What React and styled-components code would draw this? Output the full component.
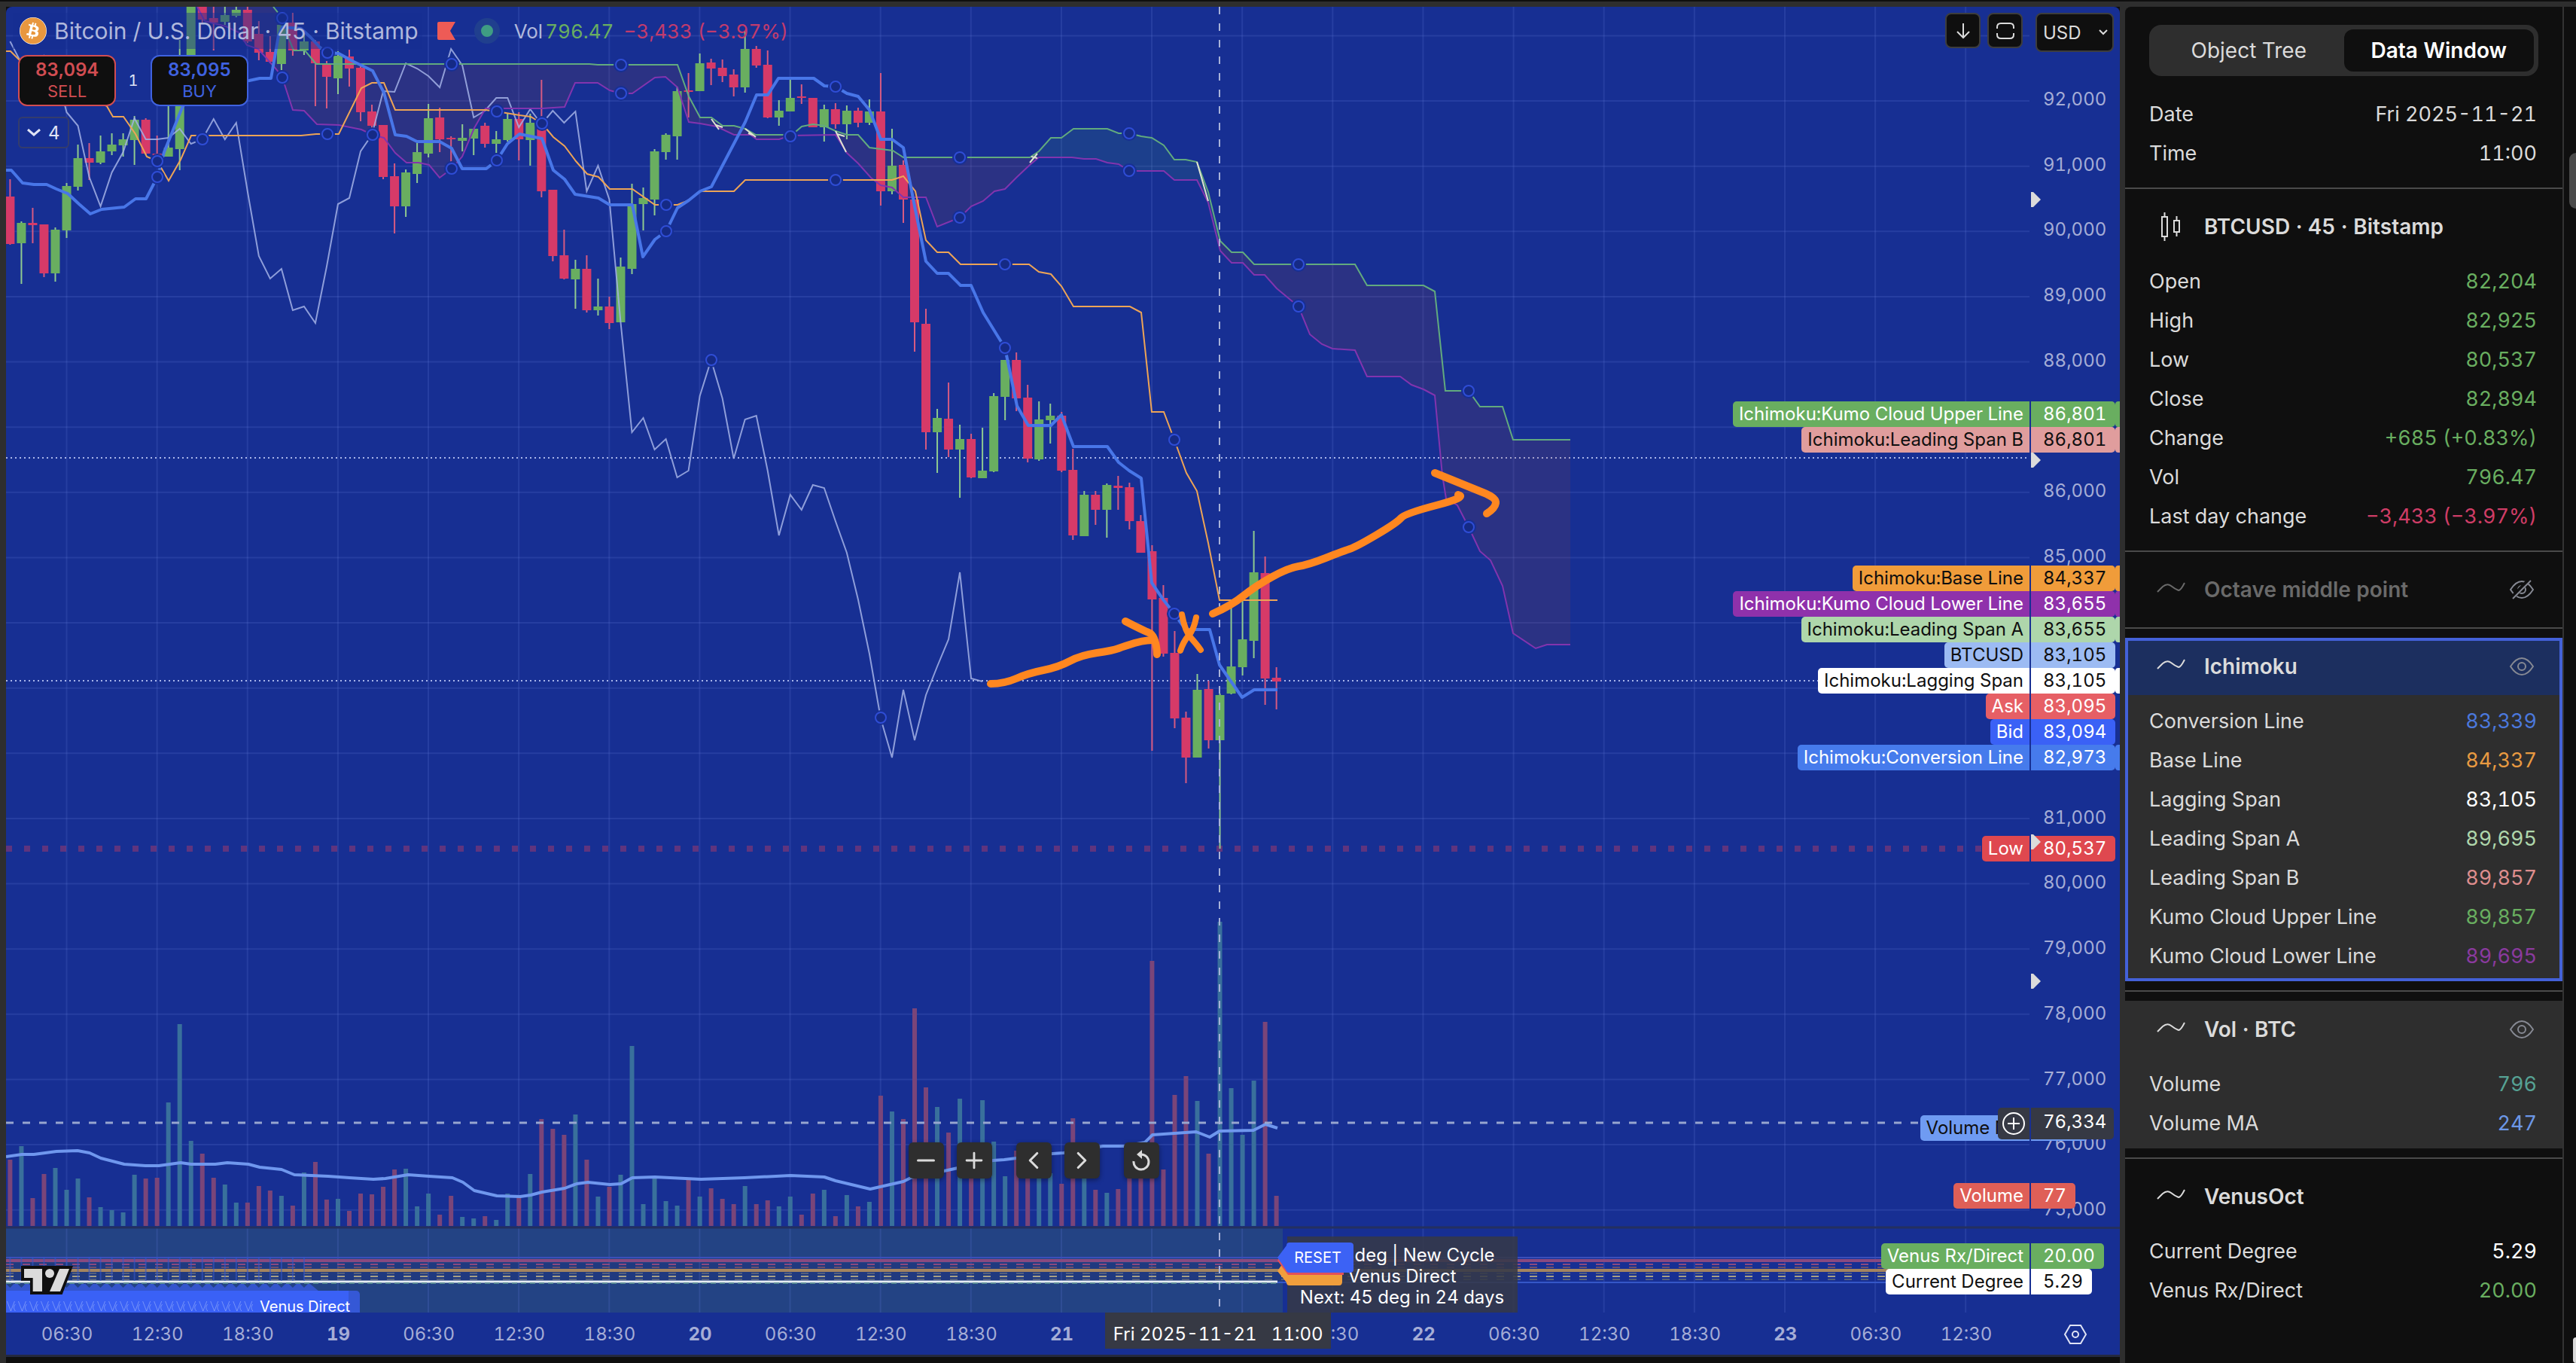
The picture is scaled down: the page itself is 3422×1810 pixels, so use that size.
import React, { useState } from 'react'
import styled, { createGlobalStyle } from 'styled-components';
import { FaBitcoin } from 'react-icons/fa';
import { Minus, Plus, ChevronLeft, ChevronRight } from 'lucide-react';

const CHART_BG = '#172f93';
const UP = '#69ae60';
const DOWN = '#d63a68';

const GlobalStyle = createGlobalStyle`
  * {
    box-sizing: border-box;
  }

  body {
    margin: 0;
    background: #0f0f0f;
    color: #dbdbdb;
    font-family: Inter, Roboto, sans-serif;
    font-size: 24px;
    font-variant-numeric: tabular-nums;
  }

  button, select {
    font-family: inherit;
    font-variant-numeric: inherit;
    margin: 0;
    cursor: pointer;
  }
`

const Page = styled.div`
  display: flex;
  flex-direction: column;
  min-height: 100vh;
  background: #2e2e2e;
  border-top: 2px solid #0f0f0f;
`

const Workspace = styled.div`
  flex: 1;
  display: flex;
  padding: 7px 0 0 8px;
`

const ChartColumn = styled.main`
  flex: 1;
  display: flex;
  flex-direction: column;
  background: #0f0f0f;
`

const ChartCard = styled.section`
  flex: 1;
  display: flex;
  flex-direction: column;
  background: ${CHART_BG};
  border-bottom: 3px solid #24293f;
  border-radius: 8px 8px 0 0;
  overflow: hidden;
`

const Footer = styled.div`
  height: 8px;
`

const ChartBody = styled.div`
  position: relative;
  flex: 1;
  display: flex;
`

const Plot = styled.div`
  position: relative;
  flex: 1;
`

const PlotSvg = styled.svg`
  position: absolute;
  inset: 0;
  width: 100%;
  height: 100%;
`

const PriceAxis = styled.div`
  width: 120px;
  display: flex;
  flex-direction: column;
`

const PriceScale = styled.div`
  flex: 1;
  display: flex;
  flex-direction: column;
  justify-content: space-between;
  padding: 108px 0 8px 18px;
  border-bottom: 3px solid #24305f;
  color: #a5add6;
`

const PriceLabel = styled.span`
  height: 30px;
  line-height: 30px;
`

const LowerScale = styled.div`
  height: 111px;
`

const TimeAxis = styled.div`
  position: relative;
  display: flex;
  height: 56px;
  padding: 0 144px 0 21px;
`

const TimeLabel = styled.span`
  flex: 1 1 0;
  text-align: center;
  line-height: 58px;
  color: #a5add6;
  font-weight: ${props => props.$day ? 700 : 400};
`

const CrosshairTime = styled.span`
  position: absolute;
  left: 52%;
  top: 0;
  width: 300px;
  height: 48px;
  line-height: 58px;
  text-align: center;
  white-space: pre;
  background: #363944;
  color: #fff;
`

const AxisSettings = styled.button`
  position: absolute;
  right: 43px;
  top: 14px;
  width: 32px;
  height: 30px;
  padding: 0;
  border: 0;
  background: none;
  color: #dfe3f5;
`

const Legend = styled.div`
  position: absolute;
  left: 9px;
  top: 8px;
`

const LegendRow = styled.div`
  display: flex;
  align-items: center;
  height: 48px;
`

const LegendTitle = styled.div`
  display: flex;
  align-items: center;
  gap: 10px;
  height: 48px;
  padding: 0 5px 0 9px;
  background: rgba(23, 47, 147, 0.45);
  color: #b0b8dc;
  font-size: 30px;
`

const CoinIcon = styled.span`
  display: flex;
  border-radius: 50%;
  background: #fff;
  color: #e8973f;
  font-size: 36px;
`

const Flag = styled.svg`
  margin-left: 20px;
`

const StatusDot = styled.span`
  width: 34px;
  height: 34px;
  margin: 0 19px 0 25px;
  border: 9px solid #203f8e;
  border-radius: 50%;
  background: #3f9d83;
`

const LegendText = styled.span`
  margin-right: ${props => props.$gap || 0}px;
  color: ${props => props.$color || '#b0b8dc'};
  font-size: 26px;
`

const TradeRow = styled.div`
  display: flex;
  align-items: center;
  margin: 8px 0 14px 7px;
`

const TradeButton = styled.button`
  display: flex;
  flex-direction: column;
  align-items: center;
  justify-content: center;
  width: 130px;
  height: 68px;
  padding: 0;
  border: 2px solid currentColor;
  border-radius: 12px;
  background: #0f0f0f;
  color: ${props => props.$color};
  font-size: 22px;
  line-height: 28px;
`

const TradePrice = styled.strong`
  font-size: 24px;
  font-weight: 600;
`

const Spread = styled.span`
  width: 46px;
  text-align: center;
  font-size: 20px;
  color: #dfe3f5;
`

const CollapseButton = styled.button`
  display: flex;
  align-items: center;
  gap: 10px;
  height: 42px;
  margin-left: 7px;
  padding: 0 10px;
  border: 2px solid #343c6c;
  border-radius: 6px;
  background: ${CHART_BG};
  color: #dfe3f5;
  font-size: 24px;
`

const TopControls = styled.div`
  position: absolute;
  top: 8px;
  right: 8px;
  display: flex;
  gap: 9px;
`

const SquareButton = styled.button`
  display: flex;
  align-items: center;
  justify-content: center;
  width: 47px;
  height: 47px;
  padding: 0;
  border: 2px solid #3d3d3d;
  border-radius: 8px;
  background: #0f0f0f;
  color: #dbdbdb;
`

const CurrencyBox = styled.label`
  position: relative;
  width: 104px;
  height: 52px;
  margin-left: 8px;
`

const CurrencySelect = styled.select`
  appearance: none;
  width: 100%;
  height: 100%;
  padding: 0 8px;
  border: 2px solid #3d3d3d;
  border-radius: 8px;
  background: #0f0f0f;
  color: #dbdbdb;
  font-size: 24px;
`

const SelectArrow = styled.svg`
  position: absolute;
  right: 8px;
  top: 22px;
  pointer-events: none;
`

const NavControls = styled.div`
  position: absolute;
  left: 44.6%;
  bottom: 178px;
  display: flex;
  gap: 17px;
`

const NavButton = styled.button`
  display: flex;
  align-items: center;
  justify-content: center;
  width: 47px;
  height: 48px;
  margin-right: ${props => props.$last ? 15 : 0}px;
  padding: 0;
  border: 0;
  border-radius: 6px;
  background: #2e2e2e;
  color: #dbdbdb;
  box-shadow: 0 2px 6px rgba(0, 0, 0, 0.4);
`

const Callout = styled.div`
  position: absolute;
  left: 63.3%;
  bottom: 0;
  width: 306px;
  height: 101px;
  padding: 11px 0;
  background: rgba(54, 57, 72, 0.88);
  color: #fff;
  line-height: 28px;
  text-align: center;
`

const CalloutLine = styled.div`
  padding-left: ${props => props.$indent || 0}px;
`

const ResetTag = styled.div`
  position: absolute;
  left: -13px;
  top: 8px;
  width: 100px;
  height: 56px;
  color: #fff;
`

const ResetShape = styled.svg`
  position: absolute;
  left: 0;
  top: 0;
`

const ResetText = styled.span`
  position: relative;
  display: block;
  padding-left: 8px;
  line-height: 40px;
  font-size: 20px;
`

const CycleTag = styled.span`
  position: absolute;
  left: 337px;
  bottom: -4px;
  line-height: 24px;
  font-size: 20px;
  color: #fff;
`

const Logo = styled.svg`
  position: absolute;
  left: 20px;
  bottom: 24px;
`

const TagStack = styled.div`
  position: absolute;
  top: ${props => props.$top}px;
  right: 0;
  display: flex;
  flex-direction: column;
  align-items: flex-end;
`

const TagRow = styled.div`
  display: flex;
  height: 34px;
  line-height: 34px;
`

const TagName = styled.span`
  margin-right: 2px;
  padding: 0 8px;
  border-radius: 5px 0 0 5px;
  background: ${props => props.$bg};
  color: ${props => props.$color};
`

const TagCell = styled.span`
  display: flex;
  justify-content: space-between;
  width: 118px;
`

const TagValue = styled.span`
  min-width: ${props => props.$wide ? 110 : 0}px;
  padding: 0 12px 0 16px;
  border-radius: 0 5px 5px 0;
  background: ${props => props.$bg};
  color: ${props => props.$color};
`

const TagStrip = styled.span`
  width: 6px;
  border-radius: 4px 0 0 4px;
  background: ${props => props.$bg};
`

const CrosshairPrice = styled.div`
  position: absolute;
  top: 1462px;
  right: 8px;
  display: flex;
  gap: 2px;
  height: 42px;
  line-height: 38px;
  color: #fff;
`

const CrosshairAdd = styled.button`
  display: flex;
  align-items: center;
  justify-content: center;
  width: 42px;
  padding: 0;
  border: 0;
  border-radius: 5px 0 0 5px;
  background: #363944;
  color: #fff;
`

const CrosshairValue = styled.span`
  width: 110px;
  padding-left: 16px;
  border-radius: 0 5px 5px 0;
  background: #363944;
`

const AxisMarker = styled.svg`
  position: absolute;
  right: 105px;
  top: ${props => props.$top}px;
`

const SidePanel = styled.aside`
  width: 583px;
  margin-left: 7px;
  padding-top: 24px;
  border-right: 2px solid #333;
  border-radius: 8px 0 0 0;
  background: #0f0f0f;
  font-size: 27px;
`

const Tabs = styled.div`
  display: flex;
  height: 68px;
  margin: 0 32px 24px;
  padding: 6px;
  border-radius: 16px;
  background: #2e2e2e;
`

const Tab = styled.button`
  flex: 1;
  border: 0;
  border-radius: 12px;
  background: ${props => props.$active ? '#0f0f0f' : 'transparent'};
  color: ${props => props.$active ? '#fff' : '#dbdbdb'};
  font-size: 28px;
  font-weight: ${props => props.$active ? 600 : 400};
`

const Section = styled.section`
  padding-bottom: ${props => props.$empty ? 0 : 8}px;
  background: ${props => props.$shaded ? '#2e2e2e' : 'transparent'};
  box-shadow: ${props => props.$selected ? 'inset 0 0 0 4px #4361d8' : 'none'};
`

const Divider = styled.hr`
  height: 2px;
  margin: 12px 0;
  border: 0;
  background: #4a4a4a;
`

const SectionHeader = styled.div`
  display: flex;
  align-items: center;
  height: 76px;
  margin-bottom: ${props => props.$empty ? 0 : 8}px;
  padding: 0 32px;
  background: ${props => props.$selected ? '#1c2f5f' : 'transparent'};
  box-shadow: ${props => props.$selected ? 'inset 0 4px #4361d8, inset 4px 0 #4361d8, inset -4px 0 #4361d8' : 'none'};
`

const SectionTitle = styled.h2`
  flex: 1;
  margin: 0 0 0 15px;
  font-size: 28px;
  font-weight: 600;
  color: ${props => props.$muted ? '#6a6a6a' : '#dbdbdb'};
`

const EyeButton = styled.button`
  width: 44px;
  height: 44px;
  padding: 0;
  border: 0;
  background: none;
  color: #868993;
`

const DataTable = styled.table`
  width: 100%;
  border-spacing: 0;

  th, td {
    height: 52px;
    padding: 0 32px;
    font-weight: 400;
    text-align: left;
  }

  td {
    text-align: right;
    padding-right: 34px;
  }
`

const DataValue = styled.td`
  color: ${props => props.$color || '#dbdbdb'};
`

const Edge = styled.div`
  display: flex;
  flex-direction: column;
  justify-content: space-between;
  align-items: flex-end;
  width: 16px;
  padding-top: 194px;
  background: #0f0f0f;
  overflow: hidden;
`

const EdgeHandle = styled.span`
  width: 9px;
  height: 74px;
  border-radius: 9px 0 0 9px;
  background: #4a4a4a;
`

const EdgeCorner = styled.span`
  width: 4px;
  height: 34px;
  border-radius: 4px 0 0 4px;
  background: #dbdbdb;
`

// [high, body top, body bottom, low, direction, volume bar height]
const candles = [
  [238, 261, 324, 325, 0, 88], [294, 296, 323, 377, 1, 106], [276, 296, 299, 323, 0, 37], [298, 298, 363, 368, 0, 69],
  [302, 305, 363, 374, 1, 77], [243, 247, 306, 316, 1, 48], [192, 210, 248, 253, 1, 63], [190, 210, 216, 239, 0, 38],
  [180, 201, 216, 218, 1, 25], [177, 192, 201, 206, 1, 21], [177, 185, 193, 208, 1, 18], [154, 159, 186, 219, 1, 68],
  [157, 159, 204, 205, 0, 63], [180, 204, 206, 213, 0, 64], [105, 196, 208, 208, 1, 164], [53, 75, 198, 226, 1, 268],
  [9, 9, 76, 100, 1, 113], [9, 9, 26, 30, 0, 96], [9, 24, 30, 67, 0, 64], [9, 20, 29, 33, 1, 55],
  [9, 13, 21, 23, 1, 31], [9, 13, 55, 57, 0, 31], [28, 45, 70, 80, 0, 53], [48, 69, 82, 84, 0, 47],
  [30, 33, 85, 93, 1, 40], [17, 30, 67, 74, 0, 27], [43, 55, 67, 73, 1, 71], [53, 55, 84, 141, 0, 85],
  [81, 84, 102, 144, 0, 35], [68, 74, 104, 125, 1, 36], [66, 75, 91, 115, 0, 20], [88, 90, 149, 161, 0, 43],
  [139, 148, 167, 171, 0, 42], [166, 166, 235, 238, 0, 52], [217, 234, 274, 310, 0, 75], [225, 229, 274, 288, 1, 76],
  [190, 202, 231, 243, 1, 26], [138, 157, 204, 209, 1, 43], [143, 156, 185, 202, 0, 15], [181, 183, 185, 215, 0, 40],
  [165, 183, 187, 201, 1, 12], [171, 171, 184, 206, 1, 10], [163, 167, 191, 196, 0, 13], [174, 185, 191, 203, 1, 8],
  [151, 158, 186, 188, 1, 43], [149, 158, 185, 213, 0, 40], [151, 163, 186, 220, 1, 69], [106, 165, 254, 262, 0, 142],
  [252, 252, 340, 347, 0, 129], [305, 339, 370, 371, 0, 121], [345, 357, 371, 410, 1, 148], [339, 357, 412, 415, 0, 88],
  [370, 407, 412, 419, 1, 39], [394, 407, 429, 437, 0, 52], [342, 354, 428, 428, 1, 68], [244, 271, 357, 364, 1, 239],
  [249, 263, 271, 306, 1, 29], [198, 201, 265, 286, 1, 64], [177, 179, 202, 212, 1, 33], [115, 121, 181, 212, 1, 27],
  [97, 120, 122, 156, 0, 62], [71, 84, 121, 121, 1, 39], [78, 83, 91, 113, 0, 50], [79, 90, 101, 109, 0, 36],
  [92, 99, 116, 128, 0, 29], [41, 65, 116, 123, 1, 53], [61, 65, 87, 90, 0, 29], [67, 86, 156, 157, 0, 34],
  [133, 147, 156, 167, 1, 26], [106, 130, 148, 148, 1, 39], [112, 128, 130, 138, 0, 15], [130, 130, 169, 169, 0, 43],
  [139, 145, 169, 188, 1, 48], [137, 145, 165, 171, 0, 13], [140, 147, 165, 185, 1, 41], [143, 147, 163, 169, 0, 26],
  [132, 148, 163, 166, 1, 32], [97, 148, 254, 273, 0, 173], [171, 220, 254, 258, 1, 152], [213, 219, 265, 296, 0, 142],
  [265, 265, 428, 467, 0, 289], [410, 430, 574, 597, 0, 184], [543, 555, 574, 628, 1, 158], [508, 556, 597, 607, 0, 124],
  [564, 583, 597, 661, 1, 169], [576, 583, 634, 635, 0, 75], [568, 625, 635, 635, 1, 167], [522, 526, 626, 627, 1, 112],
  [478, 478, 527, 558, 1, 66], [468, 478, 529, 546, 0, 100], [511, 528, 609, 614, 0, 78], [533, 557, 610, 612, 1, 70],
  [536, 552, 558, 589, 1, 70], [547, 552, 625, 627, 0, 56], [596, 624, 711, 717, 0, 143], [652, 657, 712, 712, 1, 70],
  [652, 657, 677, 697, 0, 48], [642, 644, 677, 714, 1, 44], [632, 645, 648, 677, 0, 49], [641, 647, 692, 703, 0, 70],
  [684, 692, 734, 734, 0, 70], [724, 732, 796, 997, 0, 352], [777, 794, 868, 872, 0, 75], [838, 867, 954, 967, 0, 174],
  [945, 953, 1006, 1040, 0, 199], [895, 916, 1006, 1006, 1, 166], [904, 915, 983, 994, 0, 96], [921, 923, 983, 1127, 1, 404],
  [803, 885, 921, 922, 1, 183], [796, 849, 886, 897, 1, 121], [705, 760, 851, 874, 1, 193], [739, 761, 901, 936, 0, 271],
  [886, 900, 905, 942, 0, 40],
];

const candleX = i => 13.4 + i * 15.02;

const conversionLine = '8,226 15,226 30,243 45,245 62,245 75,251 90,257 105,271 120,284 135,278 165,275 180,264 194,264 209,235 218,202 242,143 260,113 331,107 345,104 360,104 370,47 375,36 400,38 413,50 425,63 435,70 450,71 470,82 495,94 510,123 525,179 540,181 554,188 584,188 600,197 614,224 646,224 660,213 674,191 690,178 720,184 735,226 750,238 764,258 795,263 810,272 840,272 854,341 870,318 885,307 900,276 915,266 930,254 945,248 990,162 1005,126 1020,126 1034,104 1081,104 1095,114 1110,115 1125,124 1140,128 1155,146 1170,185 1185,185 1200,196 1215,274 1230,347 1245,363 1260,363 1276,379 1290,379 1306,415 1335,462 1351,539 1366,565 1396,565 1410,551 1426,593 1471,593 1486,614 1500,625 1516,635 1530,774 1545,796 1560,815 1575,836 1607,836 1620,883 1650,926 1666,916 1697,916';
const baseLine = '8,68 14,68 30,84 142,141 150,155 164,155 180,178 195,208 209,214 224,240 240,212 254,180 400,180 420,178 450,178 480,117 494,110 510,110 525,146 645,146 660,148 690,153 705,155 720,164 735,182 750,194 765,214 780,231 795,235 810,251 840,251 870,272 900,272 915,266 930,254 975,254 990,239 1185,239 1200,234 1216,254 1230,319 1245,335 1260,335 1276,351 1367,351 1380,361 1396,364 1410,380 1426,407 1501,407 1516,415 1530,547 1546,547 1560,584 1576,628 1590,652 1605,721 1620,797 1697,797';
const upperLine = '363,9 375,24 383,50 390,67 405,67 420,85 783,85 794,86 900,86 915,128 930,156 945,156 960,167 975,167 990,171 1004,179 1040,179 1050,181 1065,168 1080,165 1095,167 1110,174 1125,179 1140,179 1155,196 1186,200 1200,209 1368,209 1380,201 1396,183 1410,183 1426,171 1471,171 1486,177 1500,177 1516,181 1530,183 1546,193 1560,212 1575,212 1590,215 1605,255 1621,320 1636,335 1651,335 1666,351 1800,351 1816,379 1891,379 1906,387 1920,519 1951,519 1966,540 1996,540 2010,584 2086,584';
const lowerLine = '262,9 272,28 300,35 317,43 328,60 343,65 367,92 375,103 389,146 404,147 421,165 450,166 480,172 495,179 510,183 525,203 540,216 556,216 570,219 584,236 600,224 614,208 630,170 645,144 720,144 750,142 764,110 794,110 810,120 825,124 840,124 870,103 884,102 900,116 915,162 930,164 952,168 975,179 997,179 1005,185 1035,185 1050,180 1110,179 1125,203 1140,217 1157,236 1170,246 1185,249 1200,262 1230,262 1245,301 1275,289 1290,274 1306,267 1321,254 1335,251 1351,235 1368,219 1380,209 1424,209 1440,211 1456,211 1471,216 1486,218 1500,227 1546,227 1560,239 1590,239 1605,269 1621,333 1636,349 1651,349 1666,365 1680,365 1696,383 1725,407 1740,444 1756,457 1770,463 1800,465 1816,500 1860,500 1875,511 1891,517 1906,525 1916,631 1921,662 1936,671 1951,700 1966,732 1980,744 1996,778 2010,841 2040,861 2055,856 2086,856';
const volumeAverage = '8,1536 29,1533 45,1533 75,1529 103,1528 119,1531 134,1538 165,1546 193,1548 211,1548 240,1544 254,1546 286,1546 302,1544 330,1546 345,1550 374,1553 391,1560 436,1562 464,1564 496,1566 512,1565 542,1560 570,1562 601,1564 615,1570 630,1581 660,1588 691,1589 705,1587 720,1583 750,1578 766,1572 781,1570 810,1573 825,1572 840,1564 870,1563 931,1566 989,1564 1050,1561 1095,1563 1110,1568 1156,1579 1200,1569 1210,1564 1254,1555 1319,1541 1334,1540 1350,1538 1398,1532 1413,1531 1465,1522 1494,1522 1521,1517 1531,1507 1560,1505 1589,1503 1607,1510 1620,1502 1665,1501 1681,1493 1697,1498';

const points = line => line.split(' ').map(p => p.split(',').map(Number));

const cloud = (from, to) => {
  const inside = ([x]) => x >= from && x <= to;
  const top = points(upperLine).filter(inside);
  const bottom = points(lowerLine).filter(inside).reverse();
  return [...top, ...bottom].join(' ');
};

// the lagging span is the close price drawn 26 bars back
const laggingLine = candles
  .slice(26)
  .map((c, i) => `${candleX(i)},${c[4] ? c[1] : c[2]}`)
  .join(' ');

const anchors = [
  [209, 214], [209, 235], [269, 185], [375, 24], [375, 103], [435, 70], [435, 178], [495, 179], [600, 85], [600, 224],
  [660, 148], [660, 213], [720, 164], [825, 86], [825, 124], [885, 272], [885, 307], [945, 478], [1050, 181],
  [1110, 115], [1110, 239], [1170, 953], [1275, 209], [1275, 289], [1335, 351], [1335, 462], [1500, 177],
  [1500, 227], [1560, 584], [1560, 815], [1725, 351], [1725, 407], [1951, 519], [1951, 700],
];

const priceLabels = [
  '92,000', '91,000', '90,000', '89,000', '88,000', '', '86,000', '85,000', '', '', '',
  '81,000', '80,000', '79,000', '78,000', '77,000', '76,000', '75,000',
];

const timeLabels = [
  '06:30', '12:30', '18:30', '19', '06:30', '12:30', '18:30', '20', '06:30', '12:30', '18:30', '21',
  '', '', '18:30', '22', '06:30', '12:30', '18:30', '23', '06:30', '12:30',
];

const tagStacks = [
  {
    top: 524,
    tags: [
      { name: 'Ichimoku:Kumo Cloud Upper Line', value: '86,801', bg: '#69ae60', color: '#fff', strip: true },
      { name: 'Ichimoku:Leading Span B', value: '86,801', bg: '#e09d9d', color: '#0f0f0f', strip: true },
    ],
  },
  {
    top: 742,
    tags: [
      { name: 'Ichimoku:Base Line', value: '84,337', bg: '#f09c3a', color: '#0f0f0f', strip: true },
      { name: 'Ichimoku:Kumo Cloud Lower Line', value: '83,655', bg: '#8f31ab', color: '#fff', strip: true },
      { name: 'Ichimoku:Leading Span A', value: '83,655', bg: '#aed6ab', color: '#0f0f0f', strip: true },
      { name: 'BTCUSD', value: '83,105', bg: '#9cbbf3', color: '#0f0f0f' },
      { name: 'Ichimoku:Lagging Span', value: '83,105', bg: '#fff', color: '#0f0f0f', strip: true },
      { name: 'Ask', value: '83,095', bg: '#e65f65', color: '#fff' },
      { name: 'Bid', value: '83,094', bg: '#3a61f6', color: '#fff' },
      { name: 'Ichimoku:Conversion Line', value: '82,973', bg: '#467bec', color: '#fff', strip: true },
    ],
  },
  { top: 1101, tags: [{ name: 'Low', value: '80,537', bg: '#df484f', color: '#fff' }] },
  { top: 1472, tags: [{ name: 'Volume MA', value: '247', bg: '#6f9bf2', color: '#0f0f0f' }] },
  { top: 1562, tags: [{ name: 'Volume', value: '77', bg: '#df5f57', color: '#fff' }] },
  {
    top: 1642,
    tags: [
      { name: 'Venus Rx/Direct', value: '20.00', bg: '#69ae60', color: '#fff' },
      { name: 'Current Degree', value: '5.29', bg: '#fff', color: '#0f0f0f' },
    ],
  },
];

const sections = [
  {
    title: 'BTCUSD · 45 · Bitstamp',
    icon: 'candles',
    rows: [
      ['Open', '82,204', '#69ae60'],
      ['High', '82,925', '#69ae60'],
      ['Low', '80,537', '#69ae60'],
      ['Close', '82,894', '#69ae60'],
      ['Change', '+685 (+0.83%)', '#69ae60'],
      ['Vol', '796.47', '#69ae60'],
      ['Last day change', '−3,433 (−3.97%)', '#cf3d66'],
    ],
  },
  { title: 'Octave middle point', muted: true, eye: 'off', rows: [] },
  {
    title: 'Ichimoku',
    eye: 'on',
    selected: true,
    shaded: true,
    rows: [
      ['Conversion Line', '83,339', '#4b78dc'],
      ['Base Line', '84,337', '#e89a41'],
      ['Lagging Span', '83,105', '#fff'],
      ['Leading Span A', '89,695', '#aed6ab'],
      ['Leading Span B', '89,857', '#dd8d8d'],
      ['Kumo Cloud Upper Line', '89,857', '#69ae60'],
      ['Kumo Cloud Lower Line', '89,695', '#8a3a9e'],
    ],
  },
  {
    title: 'Vol · BTC',
    eye: 'on',
    shaded: true,
    rows: [
      ['Volume', '796', '#56a294'],
      ['Volume MA', '247', '#6c97e6'],
    ],
  },
  {
    title: 'VenusOct',
    rows: [
      ['Current Degree', '5.29', '#fff'],
      ['Venus Rx/Direct', '20.00', '#69ae60'],
    ],
  },
];

function ChartDrawing() {
  const gridX = Array.from({ length: 22 }, (_, i) => 88.5 + i * 120.13);
  const gridY = Array.from({ length: 19 }, (_, i) => 47.4 + i * 86.63);
  const cycles = Array.from({ length: 27 }, (_, i) => candleX(i));

  return (
    <PlotSvg viewBox="8 9 2688 1734" preserveAspectRatio="none" fill="none" aria-hidden="true">
      <rect x="8" y="1631" width="1696" height="112" fill="#234384" />
      <rect x="8" y="1677" width="1696" height="24" fill="#20397f" />
      <g stroke="#5f78d8" strokeOpacity="0.22" strokeWidth="2">
        {gridX.map(x => <path key={x} d={`M${x} 9V1743`} />)}
        {gridY.map(y => <path key={y} d={`M8 ${y}H2696`} />)}
      </g>

      {candles.map((c, i) => (
        <rect key={i} x={candleX(i) - 3} y={1628 - c[5]} width="6" height={c[5]}
          fill={c[4] ? '#39709c' : '#7a4579'} />
      ))}
      <path d="M8 1630H2696" stroke="#24305f" strokeWidth="3" />
      <polyline points={volumeAverage} stroke="#6f97ee" strokeWidth="4" strokeLinejoin="round" />

      <path d="M8 1127H2696" stroke="#b83c66" strokeOpacity="0.45" strokeWidth="8" strokeDasharray="8 16" />
      <path d="M8 608H2696M8 904H2696" stroke="#a9b6ea" strokeWidth="2" strokeDasharray="2 4" />

      <g fill="#a04030" fillOpacity="0.15">
        <polygon points={cloud(262, 1050)} />
        <polygon points={cloud(1110, 1380)} />
        <polygon points={cloud(1621, 2086)} />
      </g>
      <polygon points={cloud(1380, 1621)} fill="#40a060" fillOpacity="0.14" />

      {candles.map((c, i) => (
        <g key={i}>
          <path d={`M${candleX(i)} ${c[0]}V${c[3]}`} stroke={c[4] ? '#8fca90' : '#d65a82'} strokeWidth="2" />
          <rect x={candleX(i) - 6} y={c[1]} width="12" height={c[2] - c[1]} fill={c[4] ? UP : DOWN} />
        </g>
      ))}

      <polyline points={laggingLine} stroke="#a3b1e6" strokeOpacity="0.85" strokeWidth="2" />
      <polyline points={lowerLine} stroke="#8234ae" strokeWidth="2" />
      <polyline points={upperLine} stroke="#62aa7e" strokeWidth="2" />
      <polyline points={baseLine} stroke="#eda456" strokeWidth="2" />
      <polyline points={conversionLine} stroke="#4876e8" strokeWidth="4" strokeLinejoin="round" />
      <path d="M945 158l10 14M951 166l9 3M990 171l14 11M994 177l8 3M1110 174l14 28M1112 178l10 3M1368 216l10 -12M1370 208l8 2M1590 215l15 52" stroke="#dfe3d0" strokeWidth="2" />
      {anchors.map(([x, y]) => (
        <g key={`${x}-${y}`}>
          <circle cx={x} cy={y} r="10" fill={CHART_BG} />
          <circle cx={x} cy={y} r="7" fill="#152a85" stroke="#2f4dd6" strokeWidth="2" />
        </g>
      ))}

      <g strokeWidth="2">
        <path d="M8 1670H2696" stroke="#3a4fba" />
        <path d="M8 1674H2696" stroke="#8a4a80" strokeWidth="4" />
        <path d="M8 1679H2696" stroke="#8a4a80" strokeDasharray="10 12" />
        <path d="M8 1683H2696" stroke="#6a4f6c" strokeDasharray="10 12" />
        <path d="M8 1687H2696" stroke="#a5855f" strokeWidth="4" />
        <path d="M8 1691H2696M8 1699H2696" stroke="#55607c" strokeDasharray="10 12" />
        <path d="M8 1695H2696" stroke="#a79f86" strokeDasharray="10 12" />
        <path d="M1697 1703H2696" stroke="#3557c8" />
        <path d="M8 1702H1697" stroke="#e6edf2" strokeWidth="3" />
        <path d="M8 1704H1697" stroke="#5b8d96" strokeDasharray="7 5" />
      </g>
      <path d="M8 1705H412L424 1715H8Z" fill="#3455cc" />
      <path d="M8 1714H473a5 5 0 0 1 5 5V1743H8Z" fill="#3558d6" />
      <path d="M8 1714H463V1743H8Z" fill="#3a61f6" />
      {cycles.map(x => (
        <g key={x}>
          <path d={`M${x} 1669V1701`} stroke="#3557c8" strokeOpacity="0.6" strokeWidth="2" />
          <path d={`M${x - 5} 1705h10l-5 5z`} fill="#234384" />
        </g>
      ))}
      {cycles.slice(0, 22).map(x => (
        <path key={x} d={`M${x - 4} 1728l5 13 5 -13M${x + 7} 1732q-4 4 0 9`} stroke="#9db4fa" strokeOpacity="0.6" strokeWidth="1" />
      ))}

      <path d="M8 1491H2696" stroke="#98a6cf" strokeWidth="3" strokeDasharray="10 12" />
      <path d="M1620 9V1743" stroke="#a8b2d8" strokeWidth="2" strokeDasharray="10 12" />

      <g stroke="#ff8720" strokeWidth="10" strokeLinecap="round" strokeLinejoin="round">
        <path d="M1316 908Q1334 908 1350 901T1386 890T1421 878T1457 867T1486 861T1507 854T1532 850" />
        <path d="M1495 825Q1514 835 1528 841Q1536 847 1537 869" />
        <path d="M1611 815Q1636 804 1652 791T1690 766T1725 752T1761 741T1793 729T1829 710T1861 688T1908 671T1937 657" />
        <path d="M1906 628L1970 654Q1988 661 1987 668T1975 682" />
        <path d="M1570 816Q1574 838 1582 847T1595 863M1589 820Q1586 836 1579 844T1568 864" strokeWidth="8" />
      </g>
    </PlotSvg>
  )
}

function WaveIcon({ muted }) {
  return (
    <svg width="58" height="36" viewBox="0 0 58 36" fill="none" stroke={muted ? '#6a6a6a' : '#dbdbdb'} strokeWidth="2">
      <path d="M11 21L18 14Q24 9 29 13T39 19Q42 19 47 9" />
    </svg>
  )
}

function CandlesIcon() {
  return (
    <svg width="58" height="44" viewBox="0 0 58 44" fill="none" stroke="#dbdbdb" strokeWidth="2">
      <path d="M17 9h7v26h-7zM20.500 3v6M20.500 35v6M33 14h7v15h-7zM36.500 8v6M36.500 29v6" />
    </svg>
  )
}

function EyeIcon({ off }) {
  return (
    <svg width="44" height="44" viewBox="0 0 44 44" fill="none" stroke="currentColor" strokeWidth="2">
      <path d="M7 22Q14 11 22 11T37 22Q30 33 22 33T7 22Z" />
      <circle cx="22" cy="22" r="5" />
      {off && <path d="M33 8L8 34" stroke="#0f0f0f" strokeWidth="6" />}
      {off && <path d="M34 10L10 34" />}
    </svg>
  )
}

function PriceTag({ tag }) {
  return (
    <TagRow>
      <TagName $bg={tag.bg} $color={tag.color}>{tag.name}</TagName>
      <TagCell>
        <TagValue $bg={tag.bg} $color={tag.color} $wide={tag.value.length > 5}>{tag.value}</TagValue>
        {tag.strip && <TagStrip $bg={tag.bg} />}
      </TagCell>
    </TagRow>
  )
}

function ChartLegend() {
  return (
    <Legend>
      <LegendRow>
        <LegendTitle>
          <CoinIcon><FaBitcoin /></CoinIcon>
          <span>Bitcoin / U.S. Dollar · 45 · Bitstamp</span>
        </LegendTitle>
        <Flag width="24" height="24" viewBox="0 0 24 24">
          <path d="M2 0H24L17 12L24 24H2Q0 24 0 22V2Q0 0 2 0Z" fill="#ee5b56" />
        </Flag>
        <StatusDot />
        <LegendText $gap={3}>Vol</LegendText>
        <LegendText $color={UP} $gap={13}>796.47</LegendText>
        <LegendText $color="#c23b6d">−3,433 (−3.97%)</LegendText>
      </LegendRow>
      <TradeRow>
        <TradeButton $color="#d14d52">
          <TradePrice>83,094</TradePrice>
          SELL
        </TradeButton>
        <Spread>1</Spread>
        <TradeButton $color="#3f62e0">
          <TradePrice>83,095</TradePrice>
          BUY
        </TradeButton>
      </TradeRow>
      <CollapseButton>
        <svg width="18" height="10" viewBox="0 0 18 10" fill="none" stroke="currentColor" strokeWidth="3">
          <path d="M1 1L9 8L17 1" />
        </svg>
        4
      </CollapseButton>
    </Legend>
  )
}

function Chart() {
  return (
    <ChartCard>
      <ChartBody>
        <Plot>
          <ChartDrawing />
          <ChartLegend />
          <NavControls>
            <NavButton aria-label="Zoom out"><Minus size={36} strokeWidth={2} /></NavButton>
            <NavButton $last aria-label="Zoom in"><Plus size={34} strokeWidth={2} /></NavButton>
            <NavButton aria-label="Scroll left"><ChevronLeft size={38} strokeWidth={2} /></NavButton>
            <NavButton $last aria-label="Scroll right"><ChevronRight size={38} strokeWidth={2} /></NavButton>
            <NavButton aria-label="Reset chart">
              <svg width="28" height="28" viewBox="0 0 28 28" fill="none" stroke="currentColor" strokeWidth="3">
                <path d="M4 15a10 10 0 1 0 10-9" />
                <path d="M15 0V12L8 6Z" fill="currentColor" stroke="none" />
              </svg>
            </NavButton>
          </NavControls>
          <Callout>
            <CalloutLine $indent={60}>deg | New Cycle</CalloutLine>
            <CalloutLine>Venus Direct</CalloutLine>
            <CalloutLine>Next: 45 deg in 24 days</CalloutLine>
            <ResetTag>
              <ResetShape width="102" height="58" viewBox="0 0 102 58">
                <path d="M0 38L12 20H82Q86 20 86 24V52Q86 57 82 57H16Q12 57 12 53Z" fill="#f09e3c" />
                <path d="M0 24L12 6H88V43H14Z" fill="#e2505a" />
                <path d="M0 20L12 4Q12 0 16 0H96Q101 0 101 4V36Q101 40 96 40H16Q12 40 11 36Z" fill="#3c62f5" />
              </ResetShape>
              <ResetText>RESET</ResetText>
            </ResetTag>
          </Callout>
          <CycleTag>Venus Direct</CycleTag>
          <Logo width="69" height="38" viewBox="0 0 207 114">
            <path d="M0 0H207L164 114H36V59H0Z" fill="#0f0f0f" />
            <path d="M12 12H84V102H47V48H12ZM153 12H192L156 102H114Z" fill="#dbdbdb" />
            <circle cx="114" cy="30" r="18" fill="#dbdbdb" />
          </Logo>
        </Plot>
        <PriceAxis>
          <PriceScale>
            {priceLabels.map((label, i) => <PriceLabel key={i}>{label}</PriceLabel>)}
          </PriceScale>
          <LowerScale />
        </PriceAxis>
        {tagStacks.map(stack => (
          <TagStack key={stack.top} $top={stack.top}>
            {stack.tags.map(tag => <PriceTag key={tag.name} tag={tag} />)}
          </TagStack>
        ))}
        {[246, 592, 1099, 1284].map(top => (
          <AxisMarker key={top} $top={top} width="13" height="20" viewBox="0 0 13 20">
            <path d="M0 0H3L13 10L3 20H0Z" fill="#dbdbdb" />
          </AxisMarker>
        ))}
        <CrosshairPrice>
          <CrosshairAdd aria-label="Add order">
            <svg width="32" height="32" viewBox="0 0 32 32" fill="none" stroke="currentColor" strokeWidth="2">
              <circle cx="16" cy="16" r="14" />
              <path d="M16 8V24M8 16H24" />
            </svg>
          </CrosshairAdd>
          <CrosshairValue>76,334</CrosshairValue>
        </CrosshairPrice>
        <TopControls>
          <SquareButton aria-label="Move pane down">
            <svg width="24" height="24" viewBox="0 0 24 24" fill="none" stroke="currentColor" strokeWidth="2">
              <path d="M12 2V20M4 13L12 21L20 13" />
            </svg>
          </SquareButton>
          <SquareButton aria-label="Maximize">
            <svg width="24" height="24" viewBox="0 0 24 24" fill="none" stroke="currentColor" strokeWidth="2">
              <path d="M1 9V7Q1 2 6 2H18Q23 2 23 7V9M1 15V17Q1 22 6 22H18Q23 22 23 17V15" />
            </svg>
          </SquareButton>
          <CurrencyBox>
            <CurrencySelect aria-label="Currency" defaultValue="USD">
              <option>USD</option>
              <option>BTC</option>
            </CurrencySelect>
            <SelectArrow width="12" height="8" viewBox="0 0 12 8" fill="none" stroke="#dbdbdb" strokeWidth="2">
              <path d="M1 1L6 6L11 1" />
            </SelectArrow>
          </CurrencyBox>
        </TopControls>
      </ChartBody>
      <TimeAxis>
        {timeLabels.map((label, i) => (
          <TimeLabel key={i} $day={label.length === 2}>{label}</TimeLabel>
        ))}
        <CrosshairTime>Fri 2025-11-21   11:00</CrosshairTime>
        <AxisSettings aria-label="Axis settings">
          <svg width="32" height="30" viewBox="0 0 32 30" fill="none" stroke="currentColor" strokeWidth="2">
            <path d="M9 3H23L30 15L23 27H9L2 15Z" />
            <circle cx="16" cy="15" r="4" />
          </svg>
        </AxisSettings>
      </TimeAxis>
    </ChartCard>
  )
}

function DataRows({ rows }) {
  return (
    <DataTable>
      <tbody>
        {rows.map(([label, value, color]) => (
          <tr key={label}>
            <th scope="row">{label}</th>
            <DataValue $color={color}>{value}</DataValue>
          </tr>
        ))}
      </tbody>
    </DataTable>
  )
}

function DataSection({ section }) {
  const empty = section.rows.length === 0;

  return (
    <>
      <Divider />
      <Section $empty={empty} $shaded={section.shaded} $selected={section.selected}>
        <SectionHeader $empty={empty} $selected={section.selected}>
          {section.icon === 'candles' ? <CandlesIcon /> : <WaveIcon muted={section.muted} />}
          <SectionTitle $muted={section.muted}>{section.title}</SectionTitle>
          {section.eye &&
            <EyeButton aria-label={`Toggle ${section.title}`}>
              <EyeIcon off={section.eye === 'off'} />
            </EyeButton>}
        </SectionHeader>
        {!empty && <DataRows rows={section.rows} />}
      </Section>
    </>
  )
}

function App() {
  const [tab, setTab] = useState('Data Window');

  return (
    <>
      <GlobalStyle />
      <Page>
        <Workspace>
          <ChartColumn>
            <Chart />
            <Footer />
          </ChartColumn>
          <SidePanel>
            <Tabs>
              {['Object Tree', 'Data Window'].map(name => (
                <Tab key={name} $active={tab === name} onClick={() => setTab(name)}>{name}</Tab>
              ))}
            </Tabs>
            <Section>
              <DataRows rows={[['Date', 'Fri 2025-11-21'], ['Time', '11:00']]} />
            </Section>
            {sections.map(section => <DataSection key={section.title} section={section} />)}
          </SidePanel>
          <Edge>
            <EdgeHandle />
            <EdgeCorner />
          </Edge>
        </Workspace>
      </Page>
    </>
  )
}

export default App
